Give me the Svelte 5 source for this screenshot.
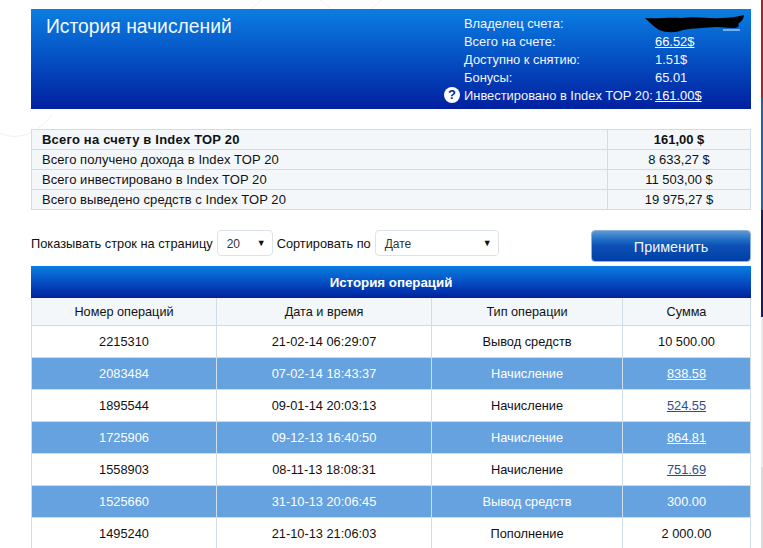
<script>
  const summary = [
    { label: 'Всего на счету в Index TOP 20', value: '161,00 $', strong: true },
    { label: 'Всего получено дохода в Index TOP 20', value: '8 633,27 $' },
    { label: 'Всего инвестировано в Index TOP 20', value: '11 503,00 $' },
    { label: 'Всего выведено средств с Index TOP 20', value: '19 975,27 $' }
  ];
  const rows = [
    { id: '2215310', date: '21-02-14 06:29:07', type: 'Вывод средств', sum: '10 500.00' },
    { id: '2083484', date: '07-02-14 18:43:37', type: 'Начисление', sum: '838.58', link: true },
    { id: '1895544', date: '09-01-14 20:03:13', type: 'Начисление', sum: '524.55', link: true },
    { id: '1725906', date: '09-12-13 16:40:50', type: 'Начисление', sum: '864.81', link: true },
    { id: '1558903', date: '08-11-13 18:08:31', type: 'Начисление', sum: '751.69', link: true },
    { id: '1525660', date: '31-10-13 20:06:45', type: 'Вывод средств', sum: '300.00' },
    { id: '1495240', date: '21-10-13 21:06:03', type: 'Пополнение', sum: '2 000.00' }
  ];
</script>

<div class="page">
  <svg class="decor" width="763" height="548" viewBox="0 0 763 548" aria-hidden="true">
    <path d="M0 133 C 20 142 38 132 52 115 M262 0 L250 10 M320 0 L332 9 M382 0 L370 10" fill="none" stroke="#eef1f3" stroke-width="1" />
  </svg>
  <div class="edge" aria-hidden="true">
    <span class="e1"></span><span class="e2"></span><span class="e3"></span><span class="e4"></span><span class="e5"></span>
  </div>

  <header class="hero">
    <h1>История начислений</h1>
    <div class="account">
      <span class="k">Владелец счета:</span>
      <span class="v"><span class="owner"><svg width="100" height="20" viewBox="0 0 100 20" aria-hidden="true"><path d="M0 3 C 14 4 24 2 36 3 C 52 1 64 4 76 3 C 84 3 92 2 99 0 C 99 4 96 7 93 9 C 95 11 93 13 88 13 L 72 12 C 60 13 48 13 38 15 C 30 18 22 18 14 15 C 8 11 4 7 0 3 Z" fill="#000" /><path d="M78 15 H95" stroke="#eaf2ff" stroke-width="1" /></svg></span></span>
      <span class="k">Всего на счете:</span>
      <span class="v"><a href="#a">66.52$</a></span>
      <span class="k">Доступно к снятию:</span>
      <span class="v">1.51$</span>
      <span class="k">Бонусы:</span>
      <span class="v">65.01</span>
      <span class="k help-row"><span class="help">?</span>Инвестировано в Index TOP 20:</span>
      <span class="v"><a href="#a">161.00$</a></span>
    </div>
  </header>

  <table class="summary">
    <tbody>
      {#each summary as s}
        <tr class:strong={s.strong}>
          <td class="lbl">{s.label}</td>
          <td class="val">{s.value}</td>
        </tr>
      {/each}
    </tbody>
  </table>

  <div class="controls">
    <div class="filters">
      <span>Показывать строк на страницу</span>
      <span class="sel sel-n">20<i>▼</i></span>
      <span>Сортировать по</span>
      <span class="sel sel-d">Дате<i>▼</i></span>
    </div>
    <button class="apply">Применить</button>
  </div>

  <div class="bar">История операций</div>
  <table class="ops">
    <thead>
      <tr>
        <th class="c1">Номер операций</th>
        <th class="c2">Дата и время</th>
        <th class="c3">Тип операции</th>
        <th class="c4">Сумма</th>
      </tr>
    </thead>
    <tbody>
      {#each rows as r, i}
        <tr class:alt={i % 2 === 1}>
          <td>{r.id}</td>
          <td>{r.date}</td>
          <td>{r.type}</td>
          <td>{#if r.link}<a href="#a">{r.sum}</a>{:else}{r.sum}{/if}</td>
        </tr>
      {/each}
    </tbody>
  </table>
</div>

<style>
  :global(body) {
    margin: 0;
    background: #fff;
    overflow: hidden;
  }
  .page {
    position: relative;
    width: 763px;
    height: 548px;
    overflow: hidden;
    padding: 9px 12px 0 31px;
    box-sizing: border-box;
    font-family: "Liberation Sans", Arial, sans-serif;
    font-size: 13px;
    color: #111;
  }
  .decor {
    position: absolute;
    left: 0;
    top: 0;
  }
  .edge {
    position: absolute;
    left: 761px;
    top: 0;
    width: 2px;
    height: 548px;
    display: flex;
    flex-direction: column;
  }
  .e1 { height: 98px; background: #a5282c; }
  .e2 { height: 112px; background: #2a5f9e; }
  .e3 { height: 107px; background: #1c1c5e; }
  .e4 { height: 150px; background: #ececec; }
  .e5 { flex: 1; background: #dcdcdc; }

  .hero {
    position: relative;
    height: 100px;
    background: linear-gradient(#0a7ee3, #0020a0);
    color: #fff;
    display: flex;
    justify-content: space-between;
    box-sizing: border-box;
  }
  h1 {
    margin: 6px 0 0 15px;
    font-size: 19.3px;
    font-weight: 400;
    line-height: 24px;
    color: #f2f8ff;
  }
  .account {
    display: grid;
    grid-template-columns: 191px 96px;
    grid-auto-rows: 18px;
    margin: 6px 0 0 0;
    font-size: 12.9px;
    line-height: 18px;
    color: #f2f6ff;
  }
  .k { white-space: nowrap; }
  .help-row { position: relative; }
  .help {
    position: absolute;
    left: -20px;
    top: 0;
    width: 16px;
    height: 16px;
    border-radius: 50%;
    background: #fff;
    color: #0b2a8f;
    font-weight: 700;
    font-size: 13px;
    line-height: 16px;
    text-align: center;
  }
  .v a { color: #fff; text-decoration: underline; }
  .owner {
    position: absolute;
    left: 614px;
    top: 6px;
    line-height: 0;
  }

  table {
    border-collapse: collapse;
    table-layout: fixed;
    width: 720px;
    position: relative;
  }
  .summary {
    margin-top: 20px;
    height: 81px;
    background: #f3f7fa;
  }
  .summary td {
    border: 1px solid #cfdde6;
    height: 19px;
    padding: 0;
    line-height: 18px;
  }
  .lbl { padding-left: 10px !important; width: 565px; letter-spacing: 0.07px; }
  .val { text-align: center; }
  .strong td { font-weight: 700; }
  .strong .lbl { letter-spacing: 0.2px; }

  .controls {
    position: relative;
    display: flex;
    justify-content: space-between;
    align-items: flex-start;
    margin-top: 20px;
    height: 36px;
  }
  .filters {
    display: flex;
    align-items: center;
    gap: 4px;
    height: 26px;
    font-size: 12.8px;
  }
  .sel {
    position: relative;
    display: block;
    box-sizing: border-box;
    height: 26px;
    border: 1px solid #dde3ea;
    border-radius: 4px;
    background: #fff;
    padding-left: 9px;
    line-height: 26px;
    font-size: 12px;
    color: #333;
  }
  .sel i {
    position: absolute;
    right: 6px;
    top: -1px;
    font-style: normal;
    font-size: 9px;
    color: #111;
  }
  .sel-n { width: 56px; }
  .sel-d { width: 124px; }
  .apply {
    width: 160px;
    height: 32px;
    border: 1px solid #8fb4dc;
    border-radius: 4px;
    background: linear-gradient(#5b9ad8 0, #1e6cc4 30%, #0c4fb4 50%, #0040a8 100%);
    color: #f2f6ff;
    font: 14.4px "Liberation Sans", Arial, sans-serif;
    padding: 1px 0 0;
  }
  .bar {
    position: relative;
    height: 32px;
    background: linear-gradient(#0a7ee3, #0020a0);
    color: #fff;
    font-weight: 700;
    font-size: 13.3px;
    line-height: 33px;
    text-align: center;
  }
  .ops th {
    height: 27px;
    padding: 0;
    font-size: 12.7px;
    font-weight: 400;
    background: #f3f7fa;
    border: 1px solid #cfdde6;
    border-top: 0;
  }
  .c1 { width: 184px; }
  .c2 { width: 214px; }
  .c3 { width: 190px; }
  .ops td {
    height: 31px;
    padding: 0;
    font-size: 12.8px;
    text-align: center;
    border: 1px solid #cfdde6;
    background: #fff;
  }
  .ops a { color: #2b4f8e; text-decoration: underline; }
  .alt td {
    background: #66a1e0;
    color: #fff;
  }
  .alt a { color: #fff; }
</style>
